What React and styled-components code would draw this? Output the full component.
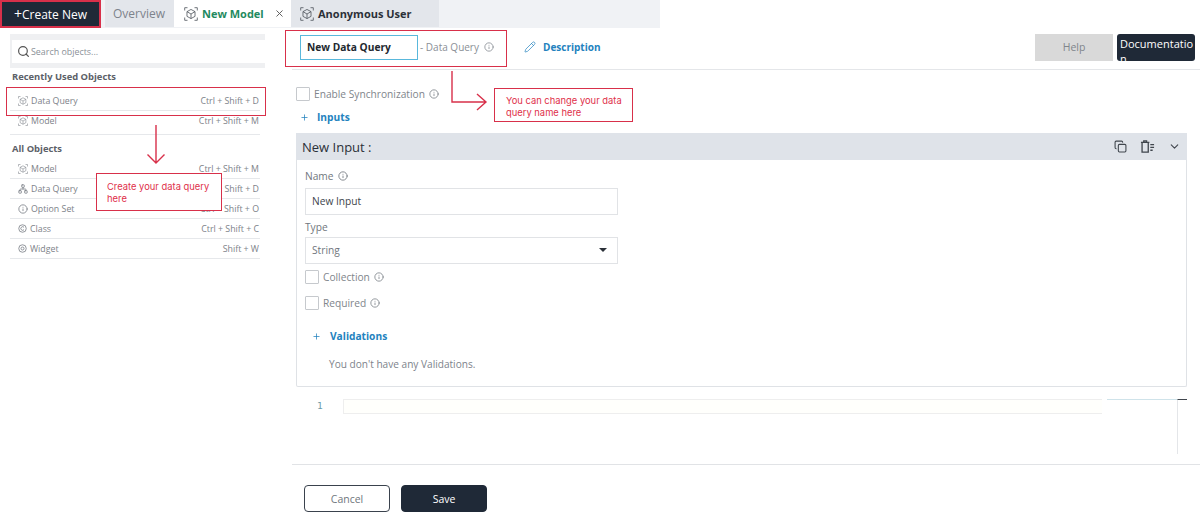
import React from 'react';
import styled, { createGlobalStyle } from 'styled-components';
import { Info, Pencil, Search, Copy, ChevronDown, Plus, X, Network } from 'lucide-react';

const GlobalStyle = createGlobalStyle`
  html, body { margin: 0; padding: 0; background: #fff; }
  body { font-family: "Open Sans", "Noto Sans", sans-serif; color: #555b63; }
  * { box-sizing: border-box; }
`;

const Page = styled.div`
  position: relative;
  width: 1200px;
  height: 532px;
  overflow: hidden;
`;

const TabBar = styled.div`
  display: flex;
  width: 660px;
  height: 28px;
  background: #f0f2f5;
`;

const CreateButton = styled.div`
  width: 101px;
  background: #1f2937;
  color: #fff;
  font-size: 12px;
  display: flex;
  align-items: center;
  justify-content: center;
  margin-right: 4px;
`;

const PlusMark = styled.span`
  font-size: 14px;
  line-height: 14px;
`;

const Tab = styled.div`
  display: flex;
  align-items: center;
  gap: 4px;
  height: 27px;
  font-size: 11px;
  font-weight: 700;
  white-space: nowrap;
  padding-left: ${p => p.$pad}px;
  width: ${p => p.$w}px;
  background: ${p => (p.$active ? '#fff' : '#e3e6eb')};
  color: ${p => (p.$active ? '#1f8a5f' : '#2b3038')};
`;

const TabIcon = styled.span`
  display: flex;
  color: #4a5058;
`;

const OverviewTab = styled(Tab)`
  font-weight: 400;
  color: #7d838b;
  font-size: 12px;
`;

const CloseIcon = styled(X)`
  margin-left: 6px;
  color: #555;
`;

const Body = styled.div`
  display: flex;
  height: 504px;
`;

const Sidebar = styled.aside`
  width: 292px;
  padding: 6px 32px 0 10px;
`;

const SearchWrap = styled.div`
  background: #eff0f2;
  padding: 6px 0 5px 2px;
  height: 34px;
  margin-right: -5px;
`;

const SearchBox = styled.div`
  height: 23px;
  background: #fff;
  display: flex;
  align-items: center;
  gap: 1px;
  padding-left: 5px;
  font-size: 8.9px;
  color: #8a9097;
`;

const SectionTitle = styled.div`
  font-size: 9.4px;
  font-weight: 700;
  color: #5c6168;
  height: 14px;
  line-height: 14px;
  padding-left: 2px;
  margin-top: ${p => p.$top}px;
  margin-bottom: ${p => p.$bottom}px;
`;

const RowList = styled.div`
  padding-bottom: ${p => p.$tail || 0}px;
  border-bottom: ${p => (p.$tail ? '1px solid #e6e8eb' : '0')};
`;

const Row = styled.div`
  height: 20px;
  border-bottom: 1px solid #e6e8eb;
  display: flex;
  align-items: center;
  justify-content: space-between;
  font-size: 8.8px;
  color: #7d8289;
  padding: 0 1px 0 8px;

  ${RowList}[data-tail] &:last-child {
    border-bottom: 0;
  }
`;

const RowName = styled.span`
  display: flex;
  align-items: center;
  gap: 3px;
`;

const Main = styled.main`
  flex: 1;
  min-width: 0;
  display: flex;
  flex-direction: column;
`;

const Header = styled.header`
  height: 42px;
  border-bottom: 1px solid #e4e6e9;
  display: flex;
  align-items: center;
  padding: 0 5px 3px 8px;
`;

const NameField = styled.div`
  width: 118px;
  height: 25px;
  border: 1px solid #59b8dc;
  font-size: 10.2px;
  font-weight: 700;
  color: #22272e;
  display: flex;
  align-items: center;
  padding-left: 6px;
`;

const NameKind = styled.span`
  font-size: 10px;
  color: #8a8f96;
  margin-left: 2px;
  display: flex;
  align-items: center;
  gap: 5px;
`;

const DescriptionLink = styled.span`
  display: flex;
  align-items: center;
  gap: 7px;
  margin-left: 30px;
  font-size: 10px;
  font-weight: 700;
  color: #2382be;
`;

const HeaderActions = styled.div`
  margin-left: auto;
  display: flex;
  gap: 4px;
`;

const HelpButton = styled.div`
  width: 78px;
  height: 27px;
  background: #d9d9d9;
  color: #80858b;
  font-size: 10.5px;
  display: flex;
  align-items: center;
  justify-content: center;
`;

const DocButton = styled.div`
  width: 78px;
  height: 27px;
  background: #1f2937;
  color: #fff;
  font-size: 11px;
  line-height: 15px;
  padding: 2px 0 0 3px;
  border-radius: 3px;
  overflow: hidden;
  word-break: break-all;
`;

const Content = styled.div`
  padding: 17px 13px 0 4px;
`;

const CheckRow = styled.label`
  display: flex;
  align-items: center;
  gap: 4px;
  height: 14px;
  font-size: 10.2px;
  color: #80858b;
`;

const SyncRow = styled(CheckRow)`
  margin-bottom: 8px;
`;

const Box = styled.span`
  display: inline-block;
  width: 14px;
  height: 14px;
  border: 1px solid #c6c9cd;
  border-radius: 1px;
  background: #fff;
`;

const AddLink = styled.div`
  display: flex;
  align-items: center;
  gap: 8px;
  height: 16px;
  padding-left: 4px;
  font-size: 10.2px;
  font-weight: 700;
  color: #2382be;
`;

const InputPanel = styled.section`
  margin-top: 8px;
  height: 254px;
  border: 1px solid #dfe2e6;
  border-top: 0;
  border-radius: 2px;
`;

const PanelHead = styled.div`
  height: 27px;
  margin: 0 -1px;
  background: #dfe3e9;
  display: flex;
  align-items: center;
  padding: 0 6px 0 6px;
  font-size: 13px;
  font-weight: 500;
  color: #2b3038;
`;

const PanelTools = styled.div`
  margin-left: auto;
  display: flex;
  align-items: center;
  gap: 13px;
  color: #40464d;
`;

const PanelBody = styled.div`
  padding: 9px 8px 0 8px;
`;

const FieldLabel = styled.div`
  display: flex;
  align-items: center;
  gap: 5px;
  height: 14px;
  font-size: 10.2px;
  color: #70767d;
`;

const TextField = styled.div`
  width: 313px;
  height: 27px;
  margin-top: ${p => p.$top}px;
  border: 1px solid #e1e3e6;
  display: flex;
  align-items: center;
  justify-content: space-between;
  padding: 0 10px 1px 6px;
  font-size: 10.2px;
  color: ${p => (p.$muted ? '#70767d' : '#3e444b')};
`;

const Caret = styled.span`
  width: 0;
  height: 0;
  border-left: 4px solid transparent;
  border-right: 4px solid transparent;
  border-top: 4px solid #2b3038;
`;

const TypeLabel = styled(FieldLabel)`
  margin-top: 5px;
`;

const PanelCheck = styled(CheckRow)`
  margin-top: ${p => p.$top}px;
`;

const ValidationLink = styled(AddLink)`
  margin-top: 18px;
  padding-left: 7px;
  gap: 9px;
`;

const EmptyNote = styled.div`
  font-size: 10.1px;
  color: #7d838b;
  margin: 13px 0 0 24px;
`;

const Editor = styled.div`
  height: 77px;
  display: flex;
  align-items: flex-start;
  padding-top: 12px;
`;

const LineNo = styled.span`
  flex: none;
  width: 47px;
  padding-left: 21px;
  font-family: "DejaVu Sans Mono", monospace;
  font-size: 9.5px;
  line-height: 14px;
  color: #6a9aa8;
`;

const LineBox = styled.div`
  flex: none;
  width: 759px;
  height: 15px;
  border: 1px solid #eeeeee;
  border-right: 0;
  background: #fffffc;
`;

const ScrollEdge = styled.div`
  flex: none;
  width: 70px;
  height: 1px;
  margin-left: 5px;
  background: #cfe3ea;
`;

const ScrollThumb = styled.div`
  flex: none;
  width: 10px;
  height: 55px;
  border-top: 1px solid #40464d;
  border-left: 1px solid #e4e6e9;
`;

const Footer = styled.footer`
  border-top: 1px solid #e1e3e6;
  padding: 20px 0 0 12px;
  display: flex;
  gap: 11px;
`;

const CancelButton = styled.div`
  width: 86px;
  height: 27px;
  border: 1px solid #3a424d;
  border-radius: 4px;
  color: #70767d;
  font-size: 10.5px;
  display: flex;
  align-items: center;
  justify-content: center;
`;

const SaveButton = styled(CancelButton)`
  background: #1f2937;
  border-color: #1f2937;
  color: #fff;
`;

/* annotation layer, drawn over the page */
const Marker = styled.div`
  position: absolute;
  left: ${p => p.$x}px;
  top: ${p => p.$y}px;
  width: ${p => p.$w}px;
  height: ${p => p.$h}px;
  border: ${p => p.$bw || 1}px solid #d8304a;
`;

const Callout = styled(Marker)`
  background: #fff;
  color: #e0304a;
  font-family: Inter, "Liberation Sans", sans-serif;
  font-size: 9.4px;
  line-height: 12px;
  padding: ${p => p.$pad};
`;

const ArrowLayer = styled.svg`
  position: absolute;
  left: 0;
  top: 0;
  pointer-events: none;
`;

const ModelIcon = ({ size = 14 }) => (
  <svg width={size} height={size} viewBox="0 0 16 16" fill="none" stroke="currentColor" strokeWidth="0.9">
    <path d="M8 2.800l4.600 2.500v5.400L8 13.200l-4.600-2.500V5.300zM3.400 5.300L8 8l4.600-2.700M8 8v5.200" />
    <path d="M.8 4V.8H4M12 .8h3.200V4M15.200 12v3.200H12M4 15.200H.8V12" />
  </svg>
);

const ClassIcon = () => (
  <svg width="9" height="9" viewBox="0 0 12 12" fill="none" stroke="currentColor" strokeWidth="1.1">
    <circle cx="6" cy="6" r="5" />
    <path d="M8 4.400A2.400 2.400 0 1 0 8 7.600" />
  </svg>
);

const WidgetIcon = () => (
  <svg width="9" height="9" viewBox="0 0 12 12" fill="none" stroke="currentColor" strokeWidth="1.1">
    <circle cx="6" cy="6" r="5" />
    <circle cx="6" cy="6" r="2" />
  </svg>
);

const TrashList = () => (
  <svg width="15" height="15" viewBox="0 0 16 16" fill="none" stroke="currentColor" strokeWidth="1.4">
    <path d="M1 3.500h9M4 3.500V2h3v1.500M2.200 3.500v10.500h6.600V3.500M11 6h4M11 9h4M11 12h2.500" />
  </svg>
);

const recent = [
  { name: 'Data Query', keys: 'Ctrl + Shift + D', icon: <ModelIcon size={10} /> },
  { name: 'Model', keys: 'Ctrl + Shift + M', icon: <ModelIcon size={10} /> },
];

const all = [
  { name: 'Model', keys: 'Ctrl + Shift + M', icon: <ModelIcon size={10} /> },
  { name: 'Data Query', keys: 'Ctrl + Shift + D', icon: <Network size={10} /> },
  { name: 'Option Set', keys: 'Ctrl + Shift + O', icon: <Info size={10} /> },
  { name: 'Class', keys: 'Ctrl + Shift + C', icon: <ClassIcon /> },
  { name: 'Widget', keys: 'Shift + W', icon: <WidgetIcon /> },
];

const ObjectRow = ({ item }) => (
  <Row>
    <RowName>{item.icon}{item.name}</RowName>
    <span>{item.keys}</span>
  </Row>
);

export default function App() {
  return (
    <Page>
      <GlobalStyle />
      <TabBar>
        <CreateButton><PlusMark>+</PlusMark>Create New</CreateButton>
        <OverviewTab $w={69} $pad={8}>Overview</OverviewTab>
        <Tab $active $w={117} $pad={10}>
          <TabIcon><ModelIcon /></TabIcon>New Model<CloseIcon size={11} />
        </Tab>
        <Tab $w={148} $pad={9}><TabIcon><ModelIcon /></TabIcon>Anonymous User</Tab>
      </TabBar>
      <Body>
        <Sidebar>
          <SearchWrap>
            <SearchBox><Search size={13} color="#555" strokeWidth={2.2} />Search objects...</SearchBox>
          </SearchWrap>
          <SectionTitle $top={2} $bottom={7}>Recently Used Objects</SectionTitle>
          <RowList $tail={3} data-tail>
            {recent.map(item => <ObjectRow key={item.name} item={item} />)}
          </RowList>
          <SectionTitle $top={7} $bottom={3}>All Objects</SectionTitle>
          <RowList>
            {all.map(item => <ObjectRow key={item.name} item={item} />)}
          </RowList>
        </Sidebar>
        <Main>
          <Header>
            <NameField>New Data Query</NameField>
            <NameKind>- Data Query <Info size={10} /></NameKind>
            <DescriptionLink><Pencil size={12} strokeWidth={1.4} />Description</DescriptionLink>
            <HeaderActions>
              <HelpButton>Help</HelpButton>
              <DocButton>Documentation</DocButton>
            </HeaderActions>
          </Header>
          <Content>
            <SyncRow><Box />Enable Synchronization <Info size={10} /></SyncRow>
            <AddLink><Plus size={9} />Inputs</AddLink>
            <InputPanel>
              <PanelHead>
                New Input :
                <PanelTools>
                  <Copy size={13} />
                  <TrashList />
                  <ChevronDown size={13} />
                </PanelTools>
              </PanelHead>
              <PanelBody>
                <FieldLabel>Name <Info size={10} /></FieldLabel>
                <TextField $top={5}>New Input</TextField>
                <TypeLabel>Type</TypeLabel>
                <TextField $muted $top={3}>String<Caret /></TextField>
                <PanelCheck $top={6}><Box />Collection <Info size={10} /></PanelCheck>
                <PanelCheck $top={12}><Box />Required <Info size={10} /></PanelCheck>
                <ValidationLink><Plus size={9} />Validations</ValidationLink>
                <EmptyNote>You don't have any Validations.</EmptyNote>
              </PanelBody>
            </InputPanel>
            <Editor>
              <LineNo>1</LineNo>
              <LineBox />
              <ScrollEdge />
              <ScrollThumb />
            </Editor>
          </Content>
          <Footer>
            <CancelButton>Cancel</CancelButton>
            <SaveButton>Save</SaveButton>
          </Footer>
        </Main>
      </Body>

      <Marker $x={0} $y={0} $w={101} $h={28} $bw={2} />
      <Marker $x={6} $y={87} $w={260} $h={29} />
      <Marker $x={285} $y={30} $w={222} $h={37} />
      <ArrowLayer width="1200" height="532" fill="none" stroke="#d8304a" strokeWidth="1.4">
        <path d="M156 125V163M147.500 154.500l8.500 8.500 8.500-8.500" />
        <path d="M452 71V102H486M477 94l9 8-9 8" />
      </ArrowLayer>
      <Callout $x={96} $y={173} $w={126} $h={38} $pad="7px 6px 7px 10px">Create your data query here</Callout>
      <Callout $x={494} $y={88} $w={139} $h={34} $pad="6px 4px 6px 11px">You can change your data query name here</Callout>
    </Page>
  );
}
